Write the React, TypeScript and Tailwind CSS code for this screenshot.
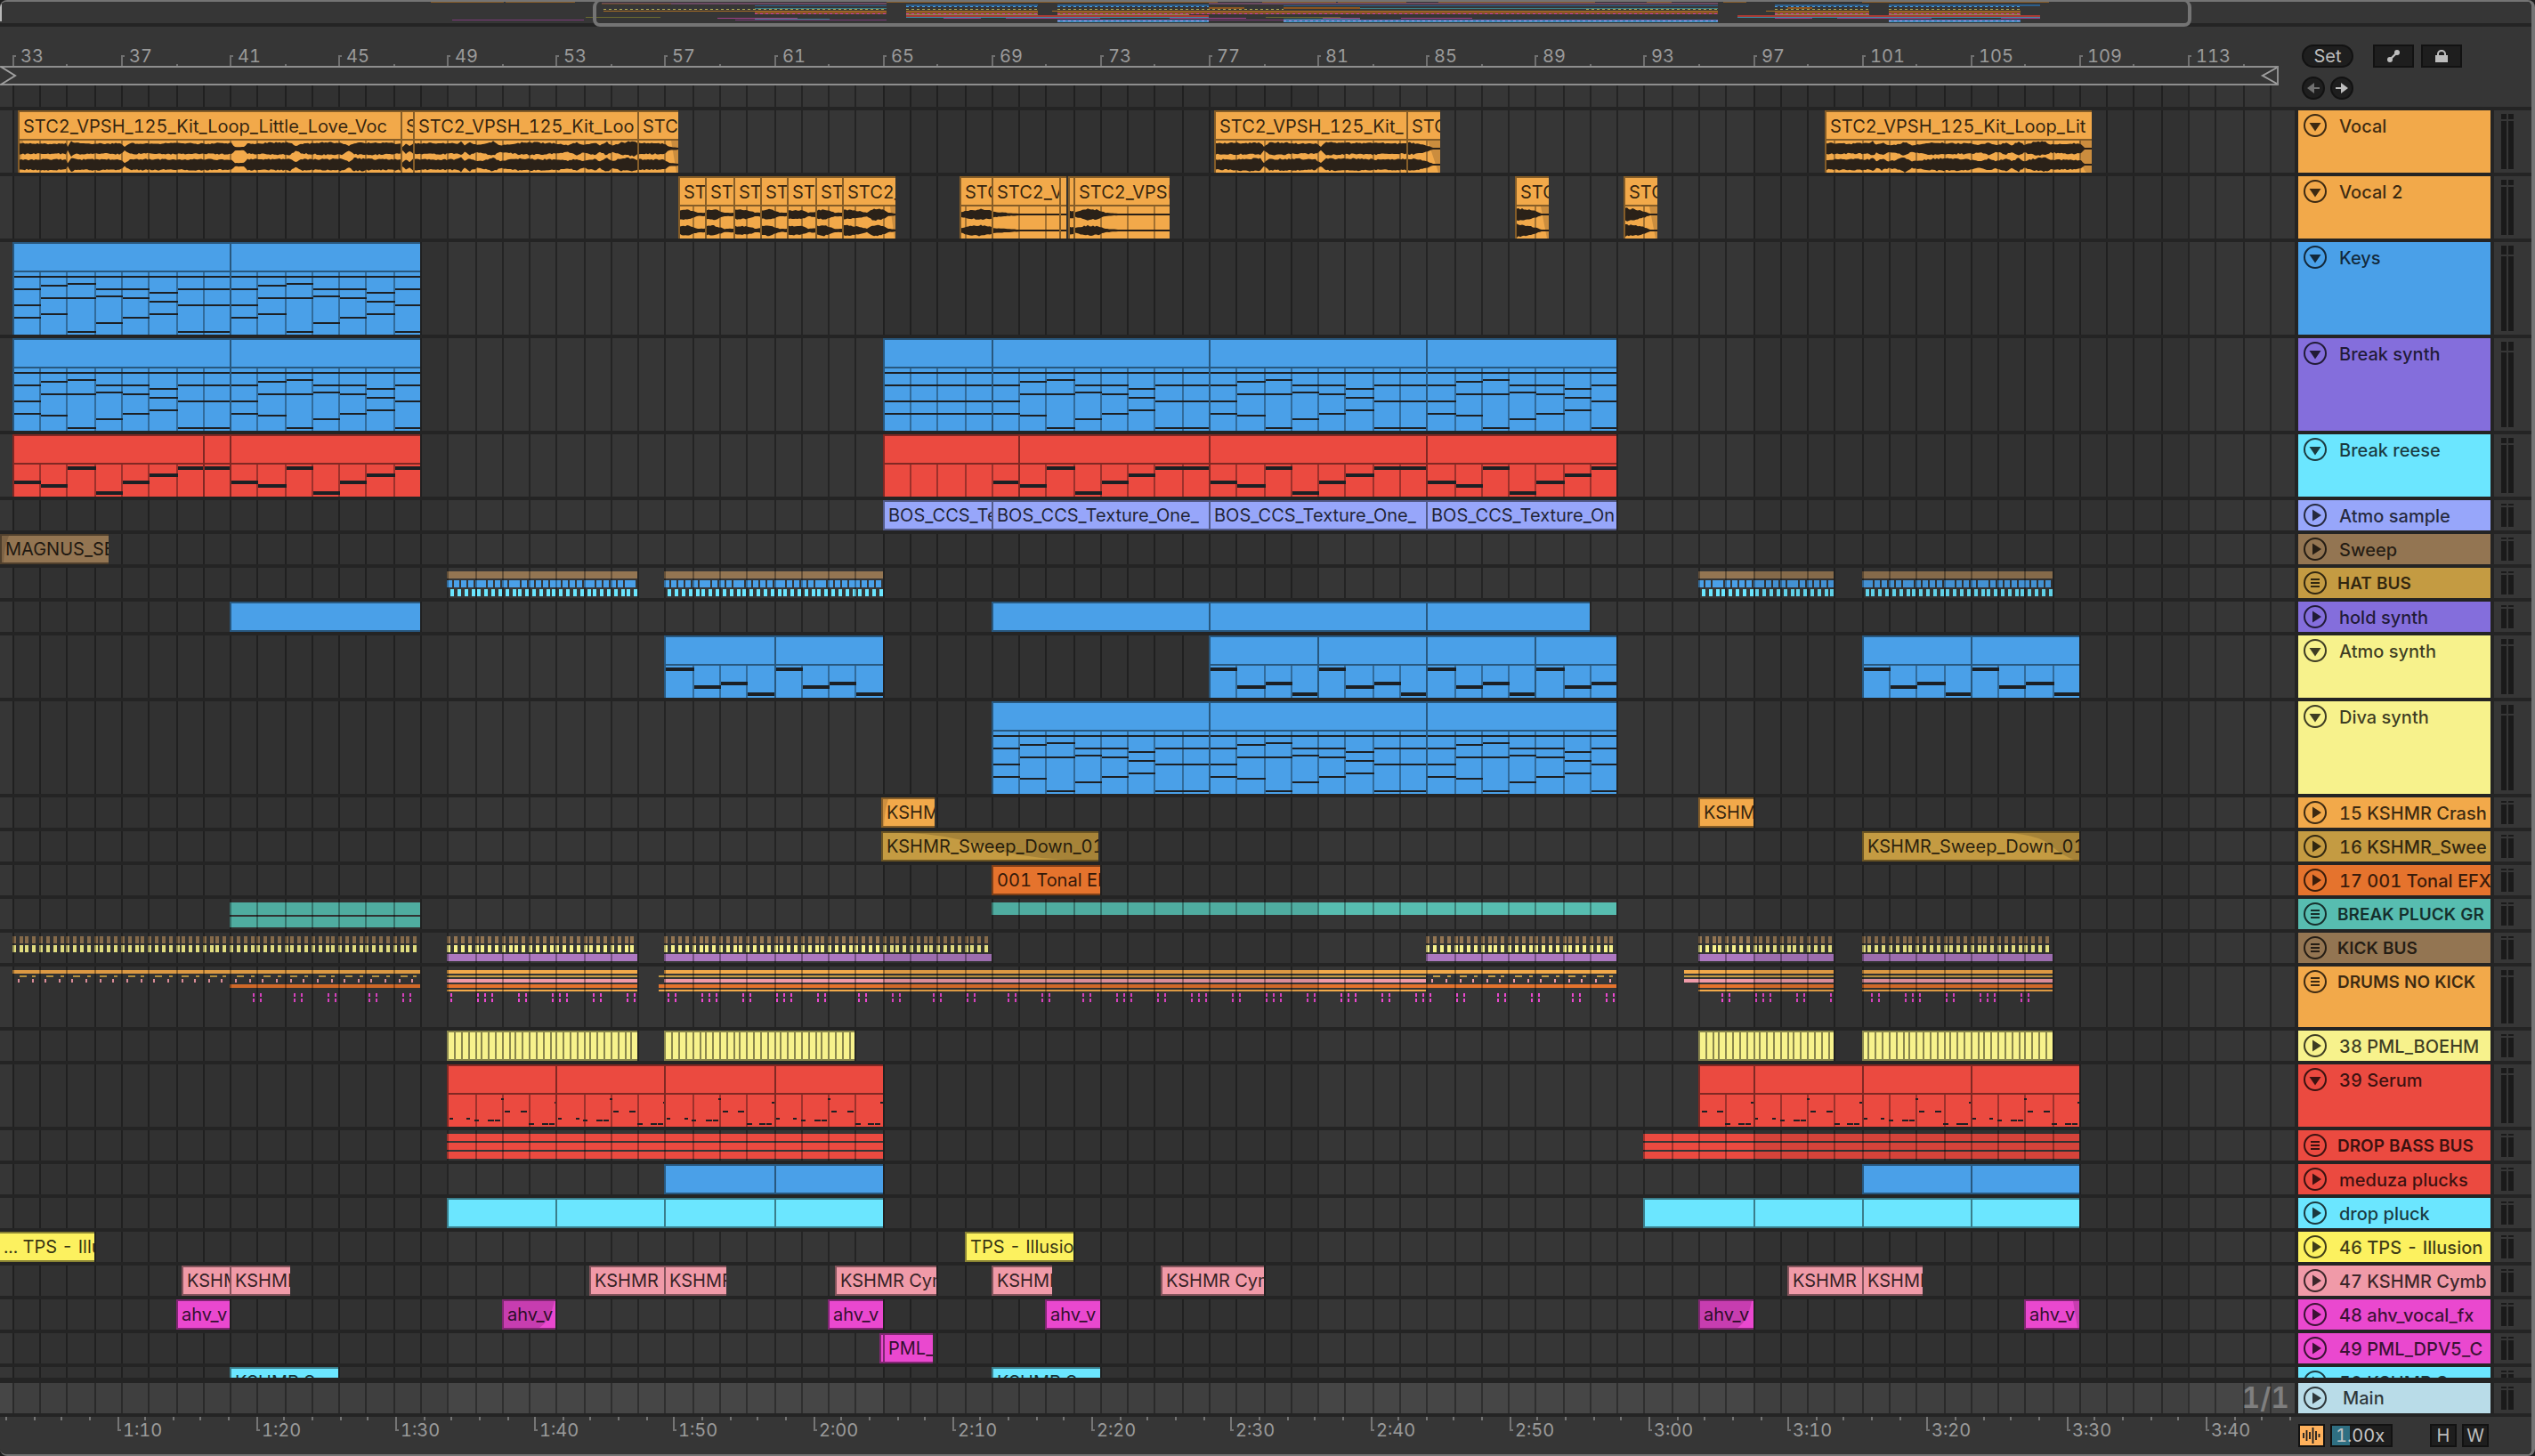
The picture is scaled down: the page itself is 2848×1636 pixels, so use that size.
import type { ReactNode } from "react";

const FIRST_BAR = 33;
const BAR_WIDTH = 15.277;

/** Horizontal position of a bar, snapped to the two-pixel timeline raster. */
const barX = (bar: number) => 2 * Math.round(6.84 + BAR_WIDTH * (bar - FIRST_BAR));

const C = {
  orange: "#f2a94a",
  blue: "#4aa0e8",
  purple: "#846edc",
  cyan: "#6be6ff",
  lilac: "#97a6fa",
  brown: "#937552",
  gold: "#c49b42",
  lemon: "#f7f28c",
  rust: "#e5732d",
  teal: "#57bdb0",
  red: "#eb4a40",
  yellow: "#fcf15f",
  pink: "#f09aa8",
  magenta: "#ea48cf",
  violet: "#ac78c0",
};

type Note = [number, number, number];
type Clip = {
  from: number;
  to: number;
  label?: string;
  env?: [number, number][];
  fade?: string;
  notes?: "keys" | "break" | "hold" | "reese" | "atmo" | "serum";
  phase?: number;
  open?: boolean;
};
type Strip = { y: number; h: number; color: string; spans: [number, number][]; tile?: [number, number, number] };
type Track = {
  name: string;
  color: string;
  size: "s" | "m" | "g" | "l" | "cut";
  kind: "down" | "play" | "group";
  clipColor?: string;
  clips?: Clip[];
  strips?: Strip[];
  marks?: boolean;
};

const SIZE = {
  s: "h-[34px]",
  m: "h-[70px]",
  g: "h-[68px]",
  l: "h-[104px]",
  cut: "h-[34px]",
};

/* ---------- note patterns: [start bar, length in bars, top] ---------- */

const chord = (rows: number[][]): Note[] =>
  rows.flatMap((tops, bar) => [38, ...tops].map((top): Note => [bar, 1, top]));

const KEYS = chord([
  [52, 70, 84], [48, 62, 80], [46, 62, 100], [52, 60, 90],
  [52, 62, 84], [56, 66, 80], [52, 70, 100], [52, 70, 100],
]);
const BREAK = chord([
  [52, 70, 84], [48, 62, 86], [46, 62, 100], [52, 60, 90],
  [52, 62, 84], [56, 66, 80], [52, 70, 100], [52, 70, 100],
]);
const HOLD = chord([[52, 70, 84], [52, 70, 84], [52, 70, 84], [52, 70, 84]]);
const REESE: Note[] = [52, 56, 36, 64, 52, 44, 36, 36].map((top, bar) => [bar, 1, top]);
const ATMO: Note[] = [36, 56, 52, 64].map((top, bar) => [bar, 1, top]);
const SERUM: Note[] = [
  [0, 0.12, 60], [0.64, 0.14, 60], [0.92, 0.16, 62], [1.42, 0.22, 62], [1.68, 0.2, 62],
  [1.9, 0.1, 38], [2.04, 0.2, 52], [2.62, 0.22, 52], [2.92, 0.2, 66], [3.4, 0.22, 66],
  [3.66, 0.2, 66], [3.86, 0.14, 42],
];
const PATTERNS = {
  keys: { notes: KEYS, length: 8, thick: 2 },
  break: { notes: BREAK, length: 8, thick: 2 },
  hold: { notes: HOLD, length: 4, thick: 2 },
  reese: { notes: REESE, length: 8, thick: 4 },
  atmo: { notes: ATMO, length: 4, thick: 4 },
  serum: { notes: SERUM, length: 4, thick: 2 },
};

/* ---------- wave forms ---------- */

function wavePath(width: number, env: [number, number][], centre: number, seed: number) {
  const amp = (x: number) => {
    for (let i = 1; i < env.length; i++) {
      const [x0, a0] = env[i - 1];
      const [x1, a1] = env[i];
      if (x <= x1) return a0 + ((a1 - a0) * (x - x0)) / Math.max(1, x1 - x0);
    }
    return env[env.length - 1][1];
  };
  const noise = (i: number) => {
    const n = Math.sin(i * 12.9898 + seed * 78.233) * 43758.5453;
    return n - Math.floor(n);
  };
  const top: string[] = [];
  const bottom: string[] = [];
  for (let x = 0; x <= width; x += 2) {
    const a = amp(x);
    const slow = Math.sin(x / 9 + seed) * 0.05;
    const up = Math.max(1, a * (0.84 + slow + noise(x) * 0.26));
    const down = Math.max(1, a * (0.84 + slow + noise(x + 500) * 0.26));
    top.push(`${x} ${(centre - up).toFixed(1)}`);
    bottom.unshift(`${x} ${(centre + down).toFixed(1)}`);
  }
  return `M${top.join("L")}L${bottom.join("L")}Z`;
}

const FULL: [number, number][] = [
  [0, 6], [52, 6], [54, 2], [58, 8], [64, 6], [114, 6], [118, 2], [124, 6], [238, 6], [242, 2],
  [252, 2], [256, 6], [304, 7], [310, 3], [318, 6], [362, 7], [370, 3], [376, 7], [430, 6],
];
const CHOPPY: [number, number][] = [
  [0, 6], [48, 6], [52, 8], [56, 4], [62, 7], [70, 4], [78, 5], [88, 8], [96, 4], [120, 7],
  [160, 6], [172, 4], [182, 7], [190, 4], [202, 7], [208, 4], [216, 8], [222, 4], [232, 7], [246, 8], [252, 5],
];
const STAB: [number, number][] = [[0, 5], [8, 6], [14, 4], [20, 2], [32, 2]];
const STAB2: [number, number][] = [[0, 5], [12, 5], [18, 4], [22, 2], [32, 3]];
const HIT: [number, number][] = [[0, 7], [10, 6], [20, 4], [28, 1], [38, 1]];
const LINE: [number, number][] = [[0, 1], [200, 1]];

/* ---------- song data ---------- */

const clips = (bounds: number[], extra: Partial<Clip> = {}): Clip[] =>
  bounds.slice(1).map((to, i) => ({ from: bounds[i], to, ...extra }));

const KICKS: [number, number][] = [[33, 48], [49, 56], [57, 69], [85, 92], [95, 100], [101, 108]];
const DROPS: [number, number][] = [[49, 56], [57, 65], [95, 100], [101, 108]];

const TRACKS: Track[] = [
  {
    name: "Vocal", color: C.orange, size: "m", kind: "down",
    clips: [
      { from: 33.2, to: 47.27, label: "STC2_VPSH_125_Kit_Loop_Little_Love_Voc", env: FULL, fade: "M0 0H4L0 36Z" },
      { from: 47.27, to: 47.74, label: "S", env: [[0, 2], [4, 6], [8, 3], [14, 7]] },
      { from: 47.74, to: 56, label: "STC2_VPSH_125_Kit_Loo", env: CHOPPY },
      { from: 56, to: 57.5, label: "STC2", env: [[0, 6], [28, 6], [34, 2], [46, 1]], fade: "M36 0H46V36H42Z" },
      { from: 77.2, to: 84.27, label: "STC2_VPSH_125_Kit_", env: [[0, 6], [50, 7], [54, 2], [60, 7], [112, 6], [118, 2], [124, 7], [216, 6]] },
      { from: 84.27, to: 85.5, label: "STC", env: [[0, 7], [10, 6], [20, 4], [28, 1], [38, 1]], fade: "M22 0H38V36H34Z" },
      { from: 99.65, to: 109.47, label: "STC2_VPSH_125_Kit_Loop_Lit", env: [...CHOPPY, [280, 6], [286, 5], [290, 1], [300, 1]], fade: "M284 0H300V36H292Q285 30 284 0Z" },
    ],
  },
  {
    name: "Vocal 2", color: C.orange, size: "m", kind: "down",
    clips: [
      { from: 57.5, to: 58.5, label: "ST", env: STAB },
      { from: 58.5, to: 59.5, label: "STC", env: STAB },
      { from: 59.5, to: 60.5, label: "ST", env: STAB2 },
      { from: 60.5, to: 61.5, label: "ST", env: STAB },
      { from: 61.5, to: 62.5, label: "STC", env: STAB2 },
      { from: 62.5, to: 63.5, label: "ST", env: STAB },
      { from: 63.5, to: 65.5, label: "STC2_", env: [[0, 6], [18, 4], [26, 2], [32, 6], [42, 6], [50, 2], [60, 1]], fade: "M52 0H60V36H57Z" },
      { from: 67.84, to: 69, label: "STC", env: [[0, 3], [10, 5], [22, 6], [36, 4]] },
      { from: 69, to: 71.5, label: "STC2_V", env: [[0, 3], [14, 2], [30, 1], [90, 1]] },
      { from: 71.5, to: 71.77, env: LINE },
      { from: 71.83, to: 72.04, env: [[0, 4], [8, 4]] },
      { from: 72.04, to: 75.56, label: "STC2_VPSH", env: [[0, 3], [14, 6], [26, 5], [34, 2], [50, 1], [110, 1]] },
      { from: 88.25, to: 89.5, label: "STC", env: HIT, fade: "M27 0H36V36H34Z" },
      { from: 92.25, to: 93.5, label: "STC", env: HIT, fade: "M27 0H36V36H34Z" },
    ],
  },
  { name: "Keys", color: C.blue, size: "l", kind: "down", clips: clips([33, 41, 48], { notes: "keys" }) },
  {
    name: "Break synth", color: C.purple, clipColor: C.blue, size: "l", kind: "down",
    clips: [
      ...clips([33, 41, 48], { notes: "break" }),
      { from: 65, to: 69, notes: "hold" },
      ...clips([69, 77, 85, 92], { notes: "break" }),
    ],
  },
  {
    name: "Break reese", color: C.cyan, clipColor: C.red, size: "m", kind: "down",
    clips: [
      { from: 33, to: 40, notes: "reese" },
      { from: 40, to: 41, notes: "reese", phase: 7 },
      { from: 41, to: 48, notes: "reese" },
      { from: 65, to: 70, notes: "reese", phase: -4 },
      { from: 70, to: 77, notes: "reese", phase: 1 },
      ...clips([77, 85, 92], { notes: "reese" }),
    ],
  },
  {
    name: "Atmo sample", color: C.lilac, size: "s", kind: "play",
    clips: [
      { from: 65, to: 69, label: "BOS_CCS_Te" },
      { from: 69, to: 77, label: "BOS_CCS_Texture_One_" },
      { from: 77, to: 85, label: "BOS_CCS_Texture_One_" },
      { from: 85, to: 92, label: "BOS_CCS_Texture_On" },
    ],
  },
  { name: "Sweep", color: C.brown, size: "s", kind: "play", clips: [{ from: 32.56, to: 36.55, label: "MAGNUS_SE", fade: "M0 0H8Q3 12 2 30H0Z" }] },
  {
    name: "HAT BUS", color: C.gold, size: "s", kind: "group",
    strips: [
      { y: 4, h: 8, color: C.brown, spans: DROPS },
      { y: 14, h: 8, color: C.blue, spans: DROPS, tile: [0.25, 0, 6] },
      { y: 24, h: 8, color: C.cyan, spans: DROPS, tile: [0.25, 0.125, 4] },
    ],
  },
  { name: "hold synth", color: C.purple, clipColor: C.blue, size: "s", kind: "play", clips: [{ from: 41, to: 48 }, ...clips([69, 77, 85, 91])] },
  {
    name: "Atmo synth", color: C.lemon, clipColor: C.blue, size: "m", kind: "down",
    clips: [
      ...clips([57, 61, 65], { notes: "atmo" }),
      ...clips([77, 81, 85, 89, 92], { notes: "atmo" }),
      ...clips([101, 105, 109], { notes: "atmo" }),
    ],
  },
  { name: "Diva synth", color: C.lemon, clipColor: C.blue, size: "l", kind: "down", clips: clips([69, 77, 85, 92], { notes: "break" }) },
  {
    name: "15 KSHMR Crash", color: C.orange, size: "s", kind: "play",
    clips: [
      { from: 64.95, to: 66.92, label: "KSHM", fade: "M0 0H6Q2 12 1 30H0Z" },
      { from: 95, to: 97, label: "KSHM" },
    ],
  },
  {
    name: "16 KSHMR_Swee", color: C.gold, size: "s", kind: "play",
    clips: [
      { from: 64.95, to: 72.94, label: "KSHMR_Sweep_Down_01", fade: "M26 0Q70 1 110 14T204 30H244V0Z" },
      { from: 101, to: 109, label: "KSHMR_Sweep_Down_01", fade: "M162 0Q196 2 210 14T236 30H244V0Z" },
    ],
  },
  { name: "17 001 Tonal EFX", color: C.rust, size: "s", kind: "play", clips: [{ from: 69, to: 73, label: "001 Tonal EF" }] },
  {
    name: "BREAK PLUCK GR", color: C.teal, size: "s", kind: "group",
    strips: [
      { y: 4, h: 14, color: C.teal, spans: [[41, 48], [69, 92]] },
      { y: 20, h: 12, color: C.teal, spans: [[41, 48]] },
    ],
  },
  {
    name: "KICK BUS", color: C.brown, size: "s", kind: "group",
    strips: [
      { y: 4, h: 8, color: C.brown, spans: KICKS, tile: [0.25, 0, 4] },
      { y: 14, h: 8, color: C.lemon, spans: KICKS, tile: [0.25, 0, 4] },
      { y: 24, h: 8, color: C.violet, spans: KICKS.slice(1) },
    ],
  },
  {
    name: "DRUMS NO KICK", color: C.orange, size: "g", kind: "group", marks: true,
    strips: [
      { y: 4, h: 4, color: C.orange, spans: [[33, 48], [49, 56], [57, 92], [94.47, 100], [101, 108]] },
      { y: 10, h: 2, color: C.gold, spans: [[33, 48], [85, 92]], tile: [1, 0.25, 8] },
      { y: 10, h: 2, color: C.gold, spans: [[33, 48], [85, 92]], tile: [1, 0.75, 4] },
      { y: 10, h: 2, color: C.gold, spans: [[49, 56], [56.77, 85], [94.47, 100], [101, 108]] },
      { y: 14, h: 4, color: C.pink, spans: [[33, 48], [85, 92]], tile: [0.5, 0.2, 2] },
      { y: 14, h: 4, color: C.pink, spans: [[49, 56], [57, 85], [94.47, 100], [101, 108]] },
      { y: 20, h: 4, color: C.rust, spans: [[41, 48], [49, 56], [56.77, 92], [95, 100], [101, 108]] },
      { y: 26, h: 2, color: C.orange, spans: [[49, 56], [56.77, 85], [95, 100], [101, 108]] },
    ],
  },
  {
    name: "38 PML_BOEHM", color: C.lemon, size: "s", kind: "play",
    clips: ([[49, 56], [57, 64], [95, 100], [101, 108]] as [number, number][]).flatMap(([a, b]) =>
      clips(Array.from({ length: (b - a) * 4 + 1 }, (_, i) => a + i / 4)),
    ),
  },
  {
    name: "39 Serum", color: C.red, size: "m", kind: "down",
    clips: [
      ...clips([49, 53, 57, 61, 65], { notes: "serum" }),
      { from: 95, to: 97, notes: "serum", phase: 2 },
      ...clips([97, 101, 105, 109], { notes: "serum" }),
    ],
  },
  {
    name: "DROP BASS BUS", color: C.red, size: "s", kind: "group",
    strips: [4, 14, 24].map((y) => ({ y, h: 8, color: C.red, spans: [[49, 65], [93, 109]] as [number, number][] })),
  },
  { name: "meduza plucks", color: C.red, clipColor: C.blue, size: "s", kind: "play", clips: [...clips([57, 61, 65]), ...clips([101, 105, 109])] },
  { name: "drop pluck", color: C.cyan, size: "s", kind: "play", clips: [...clips([49, 53, 57, 61, 65]), ...clips([93, 97, 101, 105, 109])] },
  {
    name: "46 TPS - Illusion", color: C.yellow, size: "s", kind: "play",
    clips: [
      { from: 32.56, to: 36, label: "... TPS - Illu", open: true },
      { from: 68, to: 72, label: "TPS - Illusion" },
    ],
  },
  {
    name: "47 KSHMR Cymb", color: C.pink, size: "s", kind: "play",
    clips: [
      { from: 39.2, to: 41, label: "KSHM" },
      { from: 41, to: 43.2, label: "KSHMR" },
      { from: 54.25, to: 57, label: "KSHMR C" },
      { from: 57, to: 59.25, label: "KSHMR" },
      { from: 63.25, to: 67, label: "KSHMR Cym" },
      { from: 69, to: 71.25, label: "KSHMR" },
      { from: 75.25, to: 79, label: "KSHMR Cym" },
      { from: 98.25, to: 101, label: "KSHMR C" },
      { from: 101, to: 103.25, label: "KSHMR" },
    ],
  },
  {
    name: "48 ahv_vocal_fx", color: C.magenta, size: "s", kind: "play",
    clips: [
      { from: 39, to: 41, label: "ahv_v" },
      { from: 51, to: 53, label: "ahv_v", fade: "M0 0H57Q52 22 40 30H0Z" },
      { from: 63, to: 65, label: "ahv_v" },
      { from: 71, to: 73, label: "ahv_v" },
      { from: 95, to: 97, label: "ahv_v", fade: "M0 0H58Q54 22 42 30H0Z" },
      { from: 107, to: 109, label: "ahv_v", fade: "M53 0H62V30H58Z" },
    ],
  },
  {
    name: "49 PML_DPV5_C", color: C.magenta, size: "s", kind: "play",
    clips: [{ from: 64.88, to: 65 }, { from: 65, to: 66.85, label: "PML_" }],
  },
  {
    name: "50 KSHMR S", color: C.cyan, size: "cut", kind: "play",
    clips: [{ from: 41, to: 45, label: "KSHMR S" }, { from: 69, to: 73, label: "KSHMR S" }],
  },
];

const DRUM_MARKS = [
  284, 292, 330, 338, 368, 376, 414, 422, 452, 460, 506, 536, 544, 552, 582, 590, 620, 628, 636, 666, 674, 704, 712,
  750, 758, 788, 796, 804, 834, 842, 872, 880, 888, 918, 926, 964, 972, 1002, 1010, 1048, 1056, 1086, 1094, 1132,
  1140, 1170, 1178, 1216, 1224, 1254, 1262, 1270, 1300, 1308, 1338, 1346, 1354, 1384, 1392, 1422, 1430, 1438, 1468,
  1476, 1506, 1514, 1522, 1552, 1560, 1590, 1598, 1606, 1636, 1644, 1682, 1690, 1720, 1728, 1766, 1774, 1804, 1812,
  1934, 1942, 1972, 1980, 1988, 2018, 2026, 2056, 2102, 2110, 2140, 2148, 2156, 2186, 2194, 2224, 2232, 2240, 2270,
  2278,
];

/* ---------- timeline pieces ---------- */

const BARS = Array.from({ length: 84 }, (_, i) => FIRST_BAR + i);
const GRID_PATH = BARS.map((bar) => `M${barX(bar) + 1} 0V200`).join("");

function Grid() {
  return (
    <svg className="pointer-events-none absolute inset-0 h-full w-full" shapeRendering="crispEdges" aria-hidden="true">
      {[33, 65, 97].map((bar) => (
        <rect key={bar} x={barX(bar)} y="0" width={barX(bar + 16) - barX(bar)} height="200" fill="#000" opacity="0.09" />
      ))}
      <path d={GRID_PATH} stroke="#000" strokeOpacity="0.33" strokeWidth="2" />
    </svg>
  );
}

function ClipContent({ clip, left, width }: { clip: Clip; left: number; width: number }) {
  const pattern = clip.notes ? PATTERNS[clip.notes] : null;
  const notes: ReactNode[] = [];
  if (pattern) {
    const phase = clip.phase ?? 0;
    for (let loop = -1; loop < 3; loop++) {
      pattern.notes.forEach(([start, len, top], i) => {
        const at = clip.from + start - phase + loop * pattern.length;
        if (at < clip.from || at >= clip.to || start - phase + loop * pattern.length >= pattern.length) return;
        if (phase < 0 && loop < 0) return;
        const whole = len === 1;
        const x = whole ? barX(at) : 14 + BAR_WIDTH * 2 * (at - FIRST_BAR);
        const end = whole ? barX(at + 1) : x + len * BAR_WIDTH * 2;
        notes.push(
          <rect key={`${loop}-${i}`} x={Math.round(x - left)} y={top - 34} width={Math.round(end - x)} height={pattern.thick} fill="#1c2024" />,
        );
      });
    }
  }
  return (
    <svg className="block min-h-0 w-full flex-1" shapeRendering={clip.env ? "auto" : "crispEdges"} aria-hidden="true">
      {clip.fade && <path d={clip.fade} fill="#000" opacity="0.16" />}
      <path
        d={BARS.filter((b) => barX(b) > left && barX(b) < left + width).map((b) => `M${barX(b) + 1 - left - 2} 0V80`).join("")}
        stroke="#000"
        strokeOpacity="0.33"
        strokeWidth="2"
      />
      {notes}
      {clip.env && (
        <g fill="#2a2118">
          <path d={wavePath(width, clip.env, 9, left)} />
          <path d={wavePath(width, clip.env, 27, left + 3)} />
        </g>
      )}
    </svg>
  );
}

function ClipBox({ clip, color, tall }: { clip: Clip; color: string; tall: boolean }) {
  const left = barX(clip.from);
  const width = barX(clip.to) - left;
  const edge = clip.open ? "" : "border-l-2";
  if (tall) {
    return (
      <div
        className="absolute inset-y-0 flex flex-col overflow-hidden border-t-2 border-l-2 border-black/45"
        style={{ left, width, backgroundColor: color }}
      >
        <div className="h-8 shrink-0 overflow-hidden border-b-2 border-black/45 pl-1 leading-8 whitespace-nowrap text-black/80">
          {clip.label}
        </div>
        <ClipContent clip={clip} left={left} width={width} />
      </div>
    );
  }
  return (
    <div
      className={`absolute inset-y-0 overflow-hidden border-y-2 border-black/45 ${edge}`}
      style={{ left, width, backgroundColor: color }}
    >
      {clip.fade && (
        <svg className="absolute inset-0 h-full w-full" aria-hidden="true">
          <path d={clip.fade} fill="#000" opacity="0.15" />
        </svg>
      )}
      {clip.label && <span className="relative block pl-1 leading-[30px] whitespace-nowrap text-black/80">{clip.label}</span>}
    </div>
  );
}

function Strips({ track }: { track: Track }) {
  return (
    <svg className="absolute inset-0 h-full w-full" shapeRendering="crispEdges" aria-hidden="true">
      {track.strips?.map((strip, s) =>
        strip.spans.map(([a, b]) => {
          if (!strip.tile) {
            return <rect key={`${s}-${a}`} x={barX(a)} y={strip.y} width={barX(b) - barX(a)} height={strip.h} fill={strip.color} />;
          }
          const [step, offset, w] = strip.tile;
          const d: string[] = [];
          for (let bar = a + offset; bar < b - 0.01; bar += step) d.push(`M${barX(bar)} ${strip.y}h${w}v${strip.h}h-${w}z`);
          return <path key={`${s}-${a}`} d={d.join("")} fill={strip.color} />;
        }),
      )}
      {track.marks && <path d={DRUM_MARKS.map((x) => `M${x + 1} 30v4m0 2v4`).join("")} stroke={C.magenta} strokeWidth="2" />}
    </svg>
  );
}

function FoldButton({ kind, name }: { kind: Track["kind"]; name: string }) {
  return (
    <button type="button" aria-label={`Unfold ${name}`} className="mt-1 ml-1.5 h-[26px] w-[26px] shrink-0 text-black/75">
      <svg viewBox="0 0 26 26" className="h-full w-full" aria-hidden="true">
        <circle cx="13" cy="13" r="12" fill="none" stroke="currentColor" strokeWidth="2" />
        {kind === "down" && <path d="M6.5 10h13L13 19.5z" fill="currentColor" />}
        {kind === "play" && <path d="M10 6.5 20 13 10 19.5z" fill="currentColor" />}
        {kind === "group" && <path d="M8 9h10M8 13h10M8 17h10" stroke="currentColor" strokeWidth="2" />}
      </svg>
    </button>
  );
}

function Meter({ size }: { size: Track["size"] }) {
  const top = size === "l" ? "h-2.5" : size === "s" || size === "cut" ? "h-0.5" : "h-1.5";
  return (
    <div className="flex w-[42px] shrink-0 gap-0.5 bg-[#363636] py-1 pl-2" aria-hidden="true">
      {[0, 1].map((ch) => (
        <div key={ch} className="flex w-1.5 flex-col gap-0.5">
          <div className={`bg-[#1a1a1a] ${top}`} />
          <div className="flex-1 bg-[#1a1a1a]" />
        </div>
      ))}
    </div>
  );
}

function TrackRow({ track }: { track: Track }) {
  const tall = track.size === "m" || track.size === "l";
  const group = track.kind === "group";
  return (
    <div className={`flex shrink-0 gap-1 ${SIZE[track.size]}`}>
      <div className="relative min-w-0 flex-1 overflow-hidden bg-[#363636]">
        {!group && <Grid />}
        {track.clips?.map((clip) => (
          <ClipBox key={clip.from} clip={clip} color={track.clipColor ?? track.color} tall={tall} />
        ))}
        {group && <Strips track={track} />}
        {group && <Grid />}
      </div>
      <div className="flex w-[216px] shrink-0 overflow-hidden" style={{ backgroundColor: track.color }}>
        <FoldButton kind={track.kind} name={track.name} />
        <span className={`leading-9 whitespace-nowrap text-black/75 ${group ? "ml-3 text-[19px] font-semibold" : "ml-3.5 font-medium"}`}>
          {track.name}
        </span>
      </div>
      <Meter size={track.size} />
    </div>
  );
}

/* ---------- overview ---------- */

type Mini = [number, number, string, [number, number][], boolean?];
const MINI: Mini[] = [
  [0, 1, "#8a5f2a", [[484, 566], [568, 646], [996, 1368], [1418, 1501], [1503, 1580], [1616, 1792], [1850, 1878], [1936, 1962], [2092, 2302]]],
  [1, 2, "#6b4a62", [[676, 996], [1358, 1930]]],
  [2, 1, "#6b4c26", [[676, 754]]],
  [4, 1, "#2d5f8c", [[848, 996], [1442, 1930]]],
  [3, 2, "#2d5f8c", [[1018, 1166], [1188, 1358], [1994, 2100], [2122, 2292]]],
  [5, 1, "#4aa0e8", [[1018, 1166], [1188, 1358], [1994, 2100], [2122, 2270]], true],
  [6, 2, "#8a5420", [[1358, 1398], [1442, 1528], [2008, 2036]]],
  [7, 1, "#3b7f86", [[848, 996], [1528, 1930]]],
  [8, 1, "#b5ae55", [[678, 996], [1018, 1166], [1188, 1442], [1782, 1930], [1994, 2100], [2122, 2270]], true],
  [10, 1, "#a86e24", [[678, 996], [1018, 1166], [1182, 1930], [1984, 2100], [2122, 2270]]],
  [11, 3, "#8a5528", [[848, 996], [1018, 1166], [1188, 1930], [1994, 2100], [2122, 2270]]],
  [13, 1, "#c93aa5", [[848, 996], [1018, 1166], [1188, 1930], [1994, 2100], [2122, 2270]], true],
  [14, 1, "#8a8a50", [[1018, 1166], [1188, 1336], [1994, 2100], [2122, 2270]]],
  [15, 2, "#a83a34", [[1018, 1358], [1952, 2292]]],
  [17, 1, "#3a8ea8", [[1018, 1358], [1952, 2292]]],
  [17, 1, "#6b6a30", [[658, 742], [1422, 1506]]],
  [18, 1, "#a04088", [[806, 896], [1060, 1102], [1130, 1236], [1314, 1400], [1486, 1528], [1574, 1654], [1994, 2036], [2064, 2170], [2248, 2292]]],
  [19, 1, "#3a7f8a", [[848, 932], [1442, 1528]]],
  [20, 1, "#7a3a78", [[508, 656], [826, 996], [1358, 1930]]],
  [20, 2, "#5560a8", [[1188, 1358], [1442, 1930], [2122, 2270]]],
  [21, 2, "#3a8ab8", [[1188, 1358], [1442, 1930], [2122, 2270]]],
  [21, 1, "#9aa0e8", [[1188, 1358], [1442, 1930], [2122, 2270]], true],
];

function Overview() {
  return (
    <div className="relative h-7 shrink-0 border-b-4 border-[#242424] bg-[#363636]">
      <svg className="absolute inset-0 h-6 w-full" shapeRendering="crispEdges" aria-hidden="true">
        {MINI.map(([y, h, color, spans, dots], i) => (
          <path
            key={i}
            d={spans.map(([a, b]) => `M${a} ${y + h / 2}H${b}`).join("")}
            stroke={color}
            strokeWidth={h}
            strokeDasharray={dots ? "3 3" : undefined}
          />
        ))}
      </svg>
      <div className="absolute top-0.5 left-0 h-5 w-0.5 bg-[#b8b8b8]" />
      <div className="absolute -top-0.5 -bottom-1 left-[666px] w-[1796px] rounded-lg border-4 border-t-2 border-[#747474]" />
    </div>
  );
}

/* ---------- rulers and controls ---------- */

function BarRuler() {
  return (
    <div className="relative min-w-0 flex-1 overflow-hidden">
      <svg className="absolute inset-0 h-full w-full" shapeRendering="crispEdges" aria-hidden="true">
        <path
          d={BARS.map((b) => (b % 4 === 1 ? `M${barX(b) + 4} 33h-3v11` : b % 4 === 3 ? `M${barX(b) + 1} 42v2` : "")).join("")}
          fill="none"
          stroke="#707070"
          strokeWidth="2"
        />
        <path d="M0 45H2559V65H0" fill="none" stroke="#8e8e8e" strokeWidth="2" />
        <path d="M1 45 17 55 1 65M2558 46 2542 55 2558 64" fill="none" stroke="#a0a0a0" strokeWidth="2" shapeRendering="auto" />
      </svg>
      {BARS.filter((b) => b % 4 === 1 && b < 117).map((b) => (
        <span key={b} className="absolute top-[21px] leading-6 text-[#9a9a9a]" style={{ left: barX(b) + 9 }}>
          {b}
        </span>
      ))}
    </div>
  );
}

const PILL = "flex items-center justify-center border-2 border-[#121212] bg-[#1e1e1e]";

function TopControls() {
  return (
    <div className="mt-5 flex w-[262px] shrink-0 flex-col gap-2.5 pl-2">
      <div className="flex h-[26px]">
        <button type="button" className={`${PILL} w-[58px] rounded-full text-[#bdbdbd]`}>
          Set
        </button>
        <button type="button" aria-label="Automation mode" className={`${PILL} ml-[22px] w-[46px]`}>
          <svg viewBox="0 0 14 14" className="h-3.5 w-3.5" aria-hidden="true">
            <path d="M3 11C6 8 8 6 11 3" stroke="#bdbdbd" strokeWidth="2.4" />
            <circle cx="3" cy="11" r="3" fill="#bdbdbd" />
            <circle cx="11" cy="3" r="3" fill="#bdbdbd" />
          </svg>
        </button>
        <button type="button" aria-label="Lock envelopes" className={`${PILL} ml-2 w-[46px]`}>
          <svg viewBox="0 0 14 14" className="h-3.5 w-3.5" aria-hidden="true">
            <path d="M0 6h14v8H0z" fill="#bdbdbd" />
            <path d="M3 7V4.500a4 3.600 0 0 1 8 0V7" fill="none" stroke="#bdbdbd" strokeWidth="2" />
          </svg>
        </button>
      </div>
      <div className="flex h-[26px] gap-1.5">
        <button type="button" aria-label="Previous locator" className={`${PILL} w-[26px] rounded-full`}>
          <svg viewBox="0 0 14 12" className="h-3 w-3.5" aria-hidden="true">
            <path d="M0 6 8 0V5H14V7H8V12z" fill="#707070" />
          </svg>
        </button>
        <button type="button" aria-label="Next locator" className={`${PILL} w-[26px] rounded-full`}>
          <svg viewBox="0 0 14 12" className="h-3 w-3.5" aria-hidden="true">
            <path d="M14 6 6 0V5H0V7H6V12z" fill="#bdbdbd" />
          </svg>
        </button>
      </div>
    </div>
  );
}

const TEN_SECONDS = 156.45;
const TIMES = Array.from({ length: 16 }, (_, i) => {
  const seconds = 70 + i * 10;
  return { x: 2 * Math.round((133 + i * TEN_SECONDS) / 2) - 2, label: `${Math.floor(seconds / 60)}:${String(seconds % 60).padStart(2, "0")}` };
});
const SECOND_TICKS = Array.from({ length: 83 }, (_, i) => i)
  .filter((i) => i % 5 !== 4)
  .map((i) => 2 * Math.round((133 + (i - 4) * (TEN_SECONDS / 5)) / 2) - 2)
  .filter((x) => x < 2578);

function TimeRuler() {
  return (
    <div className="relative min-w-0 flex-1 overflow-hidden">
      <svg className="absolute inset-0 h-full w-full" shapeRendering="crispEdges" aria-hidden="true">
        <path
          d={TIMES.map(({ x }) => `M${x + 1} 0v15h3`).join("") + SECOND_TICKS.map((x) => `M${x + 1} 0v4`).join("")}
          fill="none"
          stroke="#757575"
          strokeWidth="2"
        />
      </svg>
      {TIMES.map(({ x, label }) => (
        <span key={label} className="absolute top-[3px] leading-6 text-[#9a9a9a]" style={{ left: x + 6 }}>
          {label}
        </span>
      ))}
    </div>
  );
}

function BottomControls() {
  return (
    <div className="flex h-[34px] w-[262px] shrink-0 items-end gap-1.5">
      <button type="button" aria-label="Audio engine" className="flex h-[26px] w-[30px] items-center justify-center border-2 border-[#121212] bg-[#ffb15c]">
        <svg viewBox="0 0 22 20" className="h-5 w-[22px]" aria-hidden="true">
          <path d="M2 7v6M5.500 4v12M9 6v8M12.500 1v18M16 5v10M19.500 8v4" stroke="#1e1e1e" strokeWidth="1.800" />
        </svg>
      </button>
      <input
        aria-label="Playback rate"
        defaultValue="1.00x"
        className="h-[26px] w-[70px] border-2 border-[#121212] bg-[#1e1e1e] bg-linear-to-r from-[#2f6f82] from-30% to-transparent to-30% pl-1 text-[#c4c4c4]"
      />
      <div className="ml-auto flex gap-1.5 pr-12">
        <button type="button" className={`${PILL} h-[26px] w-[30px] text-[#bdbdbd]`}>
          H
        </button>
        <button type="button" className={`${PILL} h-[26px] w-[30px] text-[#bdbdbd]`}>
          W
        </button>
      </div>
    </div>
  );
}

export default function App() {
  return (
    <div className="bg-[#1e1e1e]">
      <main className="flex h-screen flex-col overflow-hidden rounded-lg border-t-2 border-r-4 border-b-2 border-[#747474] bg-[#242424] font-[Inter,sans-serif] text-xl tabular-nums">
        <Overview />
        <header className="flex h-[66px] shrink-0 bg-[#363636]">
          <BarRuler />
          <div className="relative w-[266px] shrink-0">
            <div className="absolute inset-x-0 top-0">
              <TopControls />
            </div>
          </div>
        </header>
        <div className="flex h-6 shrink-0 bg-[#363636]">
          <div className="relative min-w-0 flex-1">
            <Grid />
          </div>
          <div className="w-[266px] shrink-0" />
        </div>
        <section aria-label="Tracks" className="flex min-h-0 flex-1 flex-col gap-1 overflow-hidden pt-1">
          {TRACKS.map((track) => (
            <TrackRow key={track.name} track={track} />
          ))}
        </section>
        <footer className="flex shrink-0 flex-col gap-1 pt-1.5">
          <div className="flex h-[34px] gap-1">
            <div className="relative min-w-0 flex-1 bg-[#464646]">
              <Grid />
              <span className="relative block pr-1.5 text-right text-[32px] leading-[34px] font-semibold text-[#7f7f7f]">1/1</span>
            </div>
            <div className="flex w-[216px] shrink-0 bg-[#b9dce8]">
              <FoldButton kind="play" name="Main" />
              <span className="ml-[18px] leading-[34px] font-medium text-black/75">Main</span>
            </div>
            <Meter size="s" />
          </div>
          <div className="flex h-[42px] gap-1 bg-[#363636]">
            <TimeRuler />
            <BottomControls />
          </div>
        </footer>
      </main>
    </div>
  );
}
